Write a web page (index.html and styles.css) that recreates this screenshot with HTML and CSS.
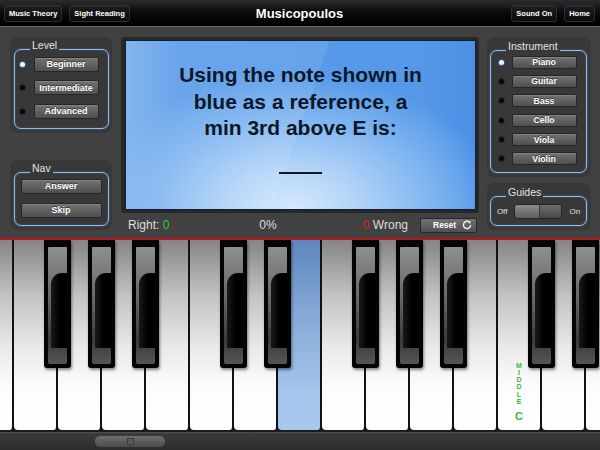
FILE: index.html
```html
<!DOCTYPE html>
<html>
<head>
<meta charset="utf-8">
<title>Musicopoulos</title>
<link rel="stylesheet" href="styles.css">
</head>
<body>
<div class="app">
  <header class="topbar">
    <div class="tb-left">
      <button class="tbtn">Music Theory</button>
      <button class="tbtn">Sight Reading</button>
    </div>
    <h1 class="title">Musicopoulos</h1>
    <div class="tb-right">
      <button class="tbtn">Sound On</button>
      <button class="tbtn">Home</button>
    </div>
  </header>

  <main class="main">
    <aside class="side side-left">
      <section class="panel panel-level">
        <div class="group">
          <span class="group-label">Level</span>
          <div class="opts opts-level">
            <div class="opt"><span class="dot on"></span><button class="gbtn">Beginner</button></div>
            <div class="opt"><span class="dot"></span><button class="gbtn">Intermediate</button></div>
            <div class="opt"><span class="dot"></span><button class="gbtn">Advanced</button></div>
          </div>
        </div>
      </section>
      <section class="panel panel-nav">
        <div class="group">
          <span class="group-label">Nav</span>
          <div class="opts opts-nav">
            <button class="gbtn wide">Answer</button>
            <button class="gbtn wide">Skip</button>
          </div>
        </div>
      </section>
    </aside>

    <section class="center">
      <div class="screen-frame">
        <div class="screen">
          <p class="question">Using the note shown in<br>blue as a reference, a<br>min 3rd above E is:</p>
          <div class="blank"></div>
        </div>
      </div>
      <div class="status">
        <div class="stats">
          <span class="right-count">Right: <span class="green">0</span></span>
          <span class="pct">0%</span>
          <span class="wrong"><span class="red">0</span> Wrong</span>
        </div>
        <button class="reset">
          <span>Reset</span>
          <svg width="10" height="10" viewBox="0 0 10 10"><path d="M7.6 2.4 A3.6 3.6 0 1 0 8.6 5" fill="none" stroke="#f2f2f2" stroke-width="1.4"/><path d="M6.2 1 L8.9 1.6 L7.8 4 Z" fill="#f2f2f2"/></svg>
        </button>
      </div>
    </section>

    <aside class="side side-right">
      <section class="panel panel-inst">
        <div class="group">
          <span class="group-label">Instrument</span>
          <div class="opts opts-inst">
            <div class="opt"><span class="dot on"></span><button class="gbtn sm">Piano</button></div>
            <div class="opt"><span class="dot"></span><button class="gbtn sm">Guitar</button></div>
            <div class="opt"><span class="dot"></span><button class="gbtn sm">Bass</button></div>
            <div class="opt"><span class="dot"></span><button class="gbtn sm">Cello</button></div>
            <div class="opt"><span class="dot"></span><button class="gbtn sm">Viola</button></div>
            <div class="opt"><span class="dot"></span><button class="gbtn sm">Violin</button></div>
          </div>
        </div>
      </section>
      <section class="panel panel-guides">
        <div class="group group-guides">
          <span class="group-label">Guides</span>
          <span class="sw-lbl">Off</span>
          <div class="switch"><span class="sw-track"></span><span class="sw-knob"></span></div>
          <span class="sw-lbl">On</span>
        </div>
      </section>
    </aside>
  </main>

  <div class="redline"></div>

  <div class="piano">
    <div class="whites">
      <div class="wkey"></div>
      <div class="wkey"></div>
      <div class="wkey"></div>
      <div class="wkey"></div>
      <div class="wkey"></div>
      <div class="wkey"></div>
      <div class="wkey"></div>
      <div class="wkey blue"></div>
      <div class="wkey"></div>
      <div class="wkey"></div>
      <div class="wkey"></div>
      <div class="wkey"></div>
      <div class="wkey mid">
        <div class="mc-word"><span>M</span><span>I</span><span>D</span><span>D</span><span>L</span><span>E</span></div>
        <div class="mc-c">C</div>
      </div>
      <div class="wkey"></div>
      <div class="wkey"></div>
    </div>
    <div class="bkey" style="left:44px"></div>
    <div class="bkey" style="left:88px"></div>
    <div class="bkey" style="left:132px"></div>
    <div class="bkey" style="left:220px"></div>
    <div class="bkey" style="left:264px"></div>
    <div class="bkey" style="left:352px"></div>
    <div class="bkey" style="left:396px"></div>
    <div class="bkey" style="left:440px"></div>
    <div class="bkey" style="left:528px"></div>
    <div class="bkey" style="left:572px"></div>
  </div>

  <div class="scrollbar"><div class="thumb"></div></div>
</div>
</body>
</html>
```

FILE: styles.css
```css
* { box-sizing: border-box; margin: 0; padding: 0; }
html, body { width: 600px; height: 450px; overflow: hidden; }
body { background: #414141; font-family: "Liberation Sans", Arial, sans-serif; color: #fff; }
button { font-family: inherit; border: 0; color: #fff; cursor: pointer; }

.app { width: 600px; height: 450px; display: flex; flex-direction: column; background: #414141; }

/* top bar */
.topbar {
  height: 27px;
  display: grid;
  grid-template-columns: 1fr auto 1fr;
  align-items: center;
  padding: 0 5px 0 4px;
  background: linear-gradient(#2c2c2c, #0b0b0b 45%, #000);
  border-bottom: 1px solid #6a6a6a;
}
.tb-left, .tb-right { display: flex; gap: 7px; }
.tb-right { justify-content: flex-end; }
.tbtn {
  height: 17px;
  padding: 0 4px;
  font-size: 7.5px;
  font-weight: bold;
  border-radius: 3px;
  background: linear-gradient(#1e1e1e, #0a0a0a);
  border: 1px solid #2e2e2e;
  box-shadow: inset 0 1px 0 rgba(255,255,255,0.06);
}
.title { font-size: 13px; font-weight: bold; color: #fff; }

/* main */
.main { height: 211px; display: flex; padding: 10px 0 0 10px; }
.side { display: flex; flex-direction: column; }
.side-left { width: 102px; }
.center { width: 358px; margin-left: 9px; display: flex; flex-direction: column; }
.side-right { width: 104px; margin-left: 8px; }

.panel { background: #383838; border-radius: 8px; padding: 12px 3px 4px 4px; }
.panel-level { height: 96px; }
.panel-nav { height: 70px; margin-top: 27px; }
.panel-inst { height: 140px; padding: 13px 4px 4px 3px; }
.panel-guides { height: 47px; margin-top: 6px; padding: 13px 4px 4px 3px; }

.group {
  position: relative;
  height: 100%;
  border: 1.5px solid #8cbcef;
  border-radius: 7px;
  box-shadow: 0 0 2px rgba(110,170,240,0.55), inset 0 0 2px rgba(110,170,240,0.35);
}
.group-label {
  position: absolute;
  top: -11px;
  left: 15px;
  padding: 0 2px;
  background: #383838;
  font-size: 10.5px;
  line-height: 12px;
  color: #e4e4e4;
}

.opts { display: flex; flex-direction: column; }
.opts-level { padding: 6.5px 0 0 5px; gap: 8.5px; }
.opts-nav { padding: 5.5px 0 0 5.5px; gap: 9px; }
.opts-inst { padding: 4.5px 0 0 8px; gap: 6.4px; }
.opt { display: flex; align-items: center; gap: 8.5px; }
.opts-inst .opt { gap: 7.5px; }

.dot { width: 5px; height: 5px; border-radius: 50%; background: #080808; box-shadow: 0 0 0 1px #2b2b2b; }
.dot.on { background: #f4f8ff; box-shadow: 0 0 0 1px #2e5f9c; }

.gbtn {
  width: 65px;
  height: 15px;
  font-size: 9px;
  font-weight: bold;
  border-radius: 2px;
  background: linear-gradient(#727272, #4f4f4f);
  border: 1px solid #262626;
  box-shadow: inset 0 1px 0 rgba(255,255,255,0.12);
  text-shadow: 0 -1px 0 rgba(0,0,0,0.5);
}
.gbtn.wide { width: 81px; }
.gbtn.sm { height: 13px; font-size: 8.7px; }

/* guides */
.group-guides { display: flex; align-items: center; justify-content: center; gap: 7px; }
.sw-lbl { font-size: 8px; color: #e4e4e4; }
.switch {
  width: 48px; height: 15px; display: flex;
  border-radius: 3px; overflow: hidden;
  border: 1px solid #262626;
  background: linear-gradient(#8c8c8c, #5e5e5e);
}
.sw-track { flex: 1; }
.sw-knob { width: 22px; background: linear-gradient(#6e6e6e, #474747); border-left: 1px solid #3a3a3a; }

/* screen */
.screen-frame { height: 176px; background: #272727; border-radius: 3px; padding: 3px 3px 3px 4px; }
.screen {
  height: 100%;
  border: 1px solid #0d1f38;
  overflow: hidden;
  text-align: center;
  padding-top: 21px;
  background:
    linear-gradient(109deg, rgba(255,255,255,0.09) 0 50%, rgba(255,255,255,0) 50%),
    radial-gradient(ellipse 70% 95% at 48% 100%, #d6e9fd 0%, #b0d2f8 28%, #82b7f1 55%, rgba(90,155,235,0) 85%),
    linear-gradient(90deg, #78aeeb, #5a9ce9 15%, #5598e8 85%, #4a90e6);
}
.question { font-size: 21px; font-weight: bold; line-height: 26.5px; color: #0c1727; }
.blank { width: 43px; height: 2px; background: #101820; margin: 30px auto 0; }

/* status */
.status { height: 24px; display: flex; align-items: center; padding: 0 2px 0 7px; font-size: 12px; color: #dedede; }
.stats { flex: 1; display: grid; grid-template-columns: 1fr auto 1fr; align-items: center; }
.pct { text-align: center; }
.wrong { text-align: right; }
.green { color: #2fd32f; }
.red { color: #e21f1f; }
.reset {
  margin-left: 12px;
  width: 57px; height: 15px;
  display: flex; align-items: center; justify-content: space-between;
  padding: 0 4px 0 12px;
  font-size: 8.5px; font-weight: bold;
  border-radius: 2px;
  background: linear-gradient(#727272, #4f4f4f);
  border: 1px solid #262626;
}

/* piano */
.redline { height: 2px; background: #b5161b; }
.piano { position: relative; height: 192px; background: #1b1b1b; overflow: hidden; }
.whites { display: flex; margin-left: -30px; height: 190px; }
.wkey {
  flex: 0 0 44px;
  height: 100%;
  border-right: 2px solid #121212;
  border-radius: 0 0 4px 4px;
  background: linear-gradient(#858585, #c4c4c4 30%, #e7e7e7 55%, #fbfbfb 75%, #fff);
}
.wkey.blue { background: linear-gradient(#5e86be, #86aad8 40%, #a4c5ec 80%, #a8c8ee); }
.wkey.mid {
  display: flex; flex-direction: column; align-items: center; justify-content: flex-end;
  padding-bottom: 8px;
  color: #3cb93c;
  font-weight: bold;
}
.mc-word { display: flex; flex-direction: column; align-items: center; font-size: 7px; line-height: 7.2px; }
.mc-c { font-size: 11px; line-height: 12px; margin-top: 5px; }

.bkey {
  position: absolute; top: 0;
  width: 27px; height: 128px;
  background: #040404;
  border-radius: 0 0 3px 3px;
  box-shadow: 1px 2px 3px rgba(0,0,0,0.45);
}
.bkey::before {
  content: "";
  position: absolute;
  left: 4px; right: 4px; top: 7px; bottom: 4px;
  border-radius: 1px 1px 2px 2px;
  background: linear-gradient(#8e8e8e, #6a6a6a 40%, #3a3a3a 80%, #555);
}
.bkey::after {
  content: "";
  position: absolute;
  left: 7px; right: 4px; top: 33px; bottom: 20px;
  border-radius: 11px 0 0 0;
  background: linear-gradient(90deg, #1a1a1a, #000 50%);
}

/* scrollbar */
.scrollbar {
  height: 18px;
  display: flex; align-items: center;
  padding-left: 95px;
  background: linear-gradient(#3c3c3c, #2c2c2c);
  border-top: 1px solid #4e4e4e;
}
.thumb {
  width: 70px; height: 11px; border-radius: 5px;
  display: flex; align-items: center; justify-content: center;
  background: linear-gradient(#6e6e6e, #4c4c4c);
}
.thumb::before { content: ""; width: 5px; height: 5px; background: #5a5a5a; border: 1px solid #3b3b3b; }
```
